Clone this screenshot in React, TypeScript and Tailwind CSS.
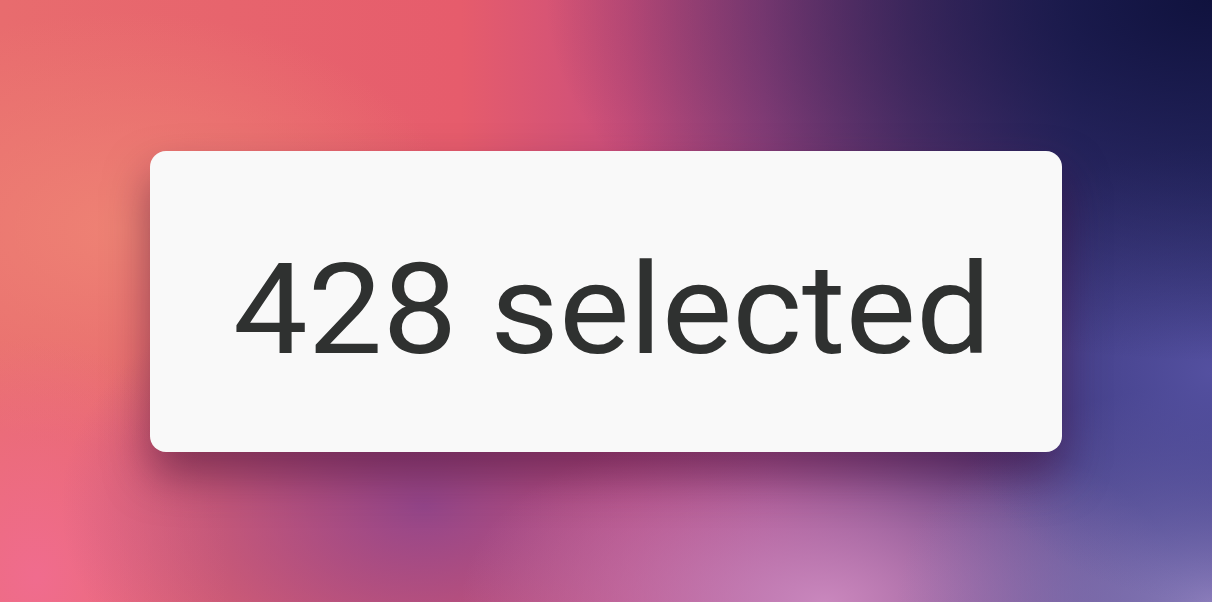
export default function App() {
  return (
    <div className="flex h-[602px] w-full items-center justify-center overflow-hidden bg-[radial-gradient(ellipse_55%_60%_at_100%_0%,#10123e_0%,rgba(16,18,62,0)_100%),radial-gradient(ellipse_22%_38%_at_100%_62%,#5450a0_0%,rgba(84,80,160,0)_100%),radial-gradient(ellipse_26%_36%_at_100%_100%,#8a7cba_0%,rgba(138,124,186,0)_100%),radial-gradient(ellipse_30%_32%_at_68%_100%,#c987bd_0%,rgba(201,135,189,0)_100%),radial-gradient(ellipse_30%_42%_at_35%_84%,#94468a_0%,rgba(148,70,138,0)_100%),radial-gradient(ellipse_16%_40%_at_3%_96%,#f06c8e_0%,rgba(240,108,142,0)_100%),radial-gradient(ellipse_28%_36%_at_10%_38%,#ee8274_0%,rgba(238,130,116,0)_100%),linear-gradient(90deg,#e86c6e_0%,#e65c6c_38%,#ca4e7c_52%,#a44886_63%,#6e3e7e_75%,#3c367c_89%,#343478_100%)]">
      <div className="flex h-[301px] w-[912px] items-center justify-center rounded-[16px] bg-[#f9f9f9] shadow-[0_24px_44px_rgba(60,10,50,0.5)]">
        <span className="translate-x-[6px] translate-y-[9px] scale-x-[1.056] font-['Roboto',sans-serif] text-[126px] leading-none text-[#2f3130]">
          428 selected
        </span>
      </div>
    </div>
  );
}
